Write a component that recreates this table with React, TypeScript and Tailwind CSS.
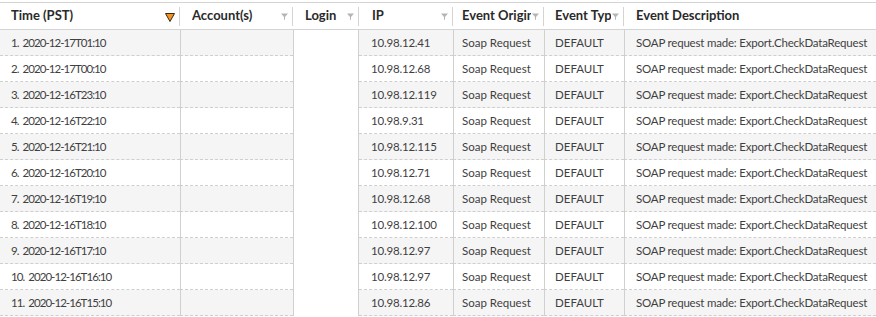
import React from "react";

const cols = [
  { key: "time", label: "Time (PST)", w: "w-[180px]", pl: "pl-[11px]", active: true },
  { key: "acct", label: "Account(s)", w: "w-[113px]", pl: "pl-[12px]" },
  { key: "login", label: "Login", w: "w-[66px]", pl: "pl-[12px]" },
  { key: "ip", label: "IP", w: "w-[94px]", pl: "pl-[13px]" },
  { key: "origin", label: "Event Origin", w: "w-[91px]", pl: "pl-[9px]" },
  { key: "type", label: "Event Type", w: "w-[80px]", pl: "pl-[11px]" },
  { key: "desc", label: "Event Description", w: "flex-1", pl: "pl-[12px]", noFilter: true },
];

const rows = [
  ["2020-12-17T01:10", "10.98.12.41"],
  ["2020-12-17T00:10", "10.98.12.68"],
  ["2020-12-16T23:10", "10.98.12.119"],
  ["2020-12-16T22:10", "10.98.9.31"],
  ["2020-12-16T21:10", "10.98.12.115"],
  ["2020-12-16T20:10", "10.98.12.71"],
  ["2020-12-16T19:10", "10.98.12.68"],
  ["2020-12-16T18:10", "10.98.12.100"],
  ["2020-12-16T17:10", "10.98.12.97"],
  ["2020-12-16T16:10", "10.98.12.97"],
  ["2020-12-16T15:10", "10.98.12.86"],
];

function Funnel({ active }: { active?: boolean }) {
  if (active) {
    return (
      <svg width="10" height="9" viewBox="0 0 10 9" className="shrink-0">
        <path d="M0.5 0.5 H9.5 L5 8.5 Z" fill="#f29423" stroke="#3a2a10" strokeWidth="1" strokeLinejoin="round" />
      </svg>
    );
  }
  return (
    <svg width="7" height="7" viewBox="0 0 7 7" className="shrink-0">
      <path d="M0 0.5 H7 L4 4 V7 L3 6.5 V4 Z" fill="#b5b5b5" />
    </svg>
  );
}

const sep = { borderLeftStyle: "solid" as const };

export default function App() {
  return (
    <div
      className="w-[876px] h-[317px] bg-white overflow-hidden pt-[2px] text-[11.5px] text-[#3f3f3f]"
      style={{ fontFamily: "Lato, 'Open Sans', sans-serif" }}
    >
      {/* header */}
      <div className="flex h-[28px] border-y border-[#d4d4d4] bg-white">
        {cols.map((c, i) => (
          <div key={c.key} className={`${c.w} relative flex items-center ${c.pl} pr-[13px] font-bold text-[#2a2a2a] text-[13px]`}>
            <span className="flex-1 whitespace-nowrap overflow-hidden">{c.label}</span>
            {!c.noFilter && (
              <span className="absolute right-[5px] top-[10px] flex items-center">
                <Funnel active={c.active} />
              </span>
            )}
            {i < cols.length - 1 && (
              <span className="absolute right-0 top-[4px] h-[19px] w-px bg-[#d4d4d4]" />
            )}
          </div>
        ))}
      </div>
      {/* body */}
      <div className="flex flex-col">
        {rows.map((r, i) => {
          const bg = i % 2 === 0 ? "bg-[#f5f5f5]" : "bg-white";
          return (
            <div key={i} className="flex h-[26px]">
              <div className={`w-[180px] ${bg} border-b border-dashed border-[#cfcfcf] flex items-center pl-[11px] whitespace-nowrap tracking-[-0.95px]`}>
                <span>{i + 1}.</span>
                <span className="ml-[4px]">{r[0]}</span>
              </div>
              <div className={`w-[113px] ${bg} border-b border-dashed border-[#cfcfcf] border-l border-l-[#d0d0d0]`} style={sep} />
              <div className="w-[66px] bg-white border-x border-[#d0d0d0]" />
              <div className={`w-[94px] ${bg} border-b border-dashed border-[#cfcfcf] flex items-center pl-[12px] whitespace-nowrap tracking-[-0.2px]`}>
                {r[1]}
              </div>
              <div className={`w-[91px] ${bg} border-b border-dashed border-[#cfcfcf] border-l border-l-[#d0d0d0] flex items-center pl-[8px] whitespace-nowrap`} style={sep}>
                Soap Request
              </div>
              <div className={`w-[80px] ${bg} border-b border-dashed border-[#cfcfcf] border-l border-l-[#d0d0d0] flex items-center pl-[10px] whitespace-nowrap`} style={sep}>
                DEFAULT
              </div>
              <div className={`flex-1 ${bg} border-b border-dashed border-[#cfcfcf] border-l border-l-[#d0d0d0] flex items-center pl-[11px] whitespace-nowrap overflow-hidden tracking-[-0.2px]`} style={sep}>
                SOAP request made: Export.CheckDataRequest
              </div>
            </div>
          );
        })}
      </div>
    </div>
  );
}
